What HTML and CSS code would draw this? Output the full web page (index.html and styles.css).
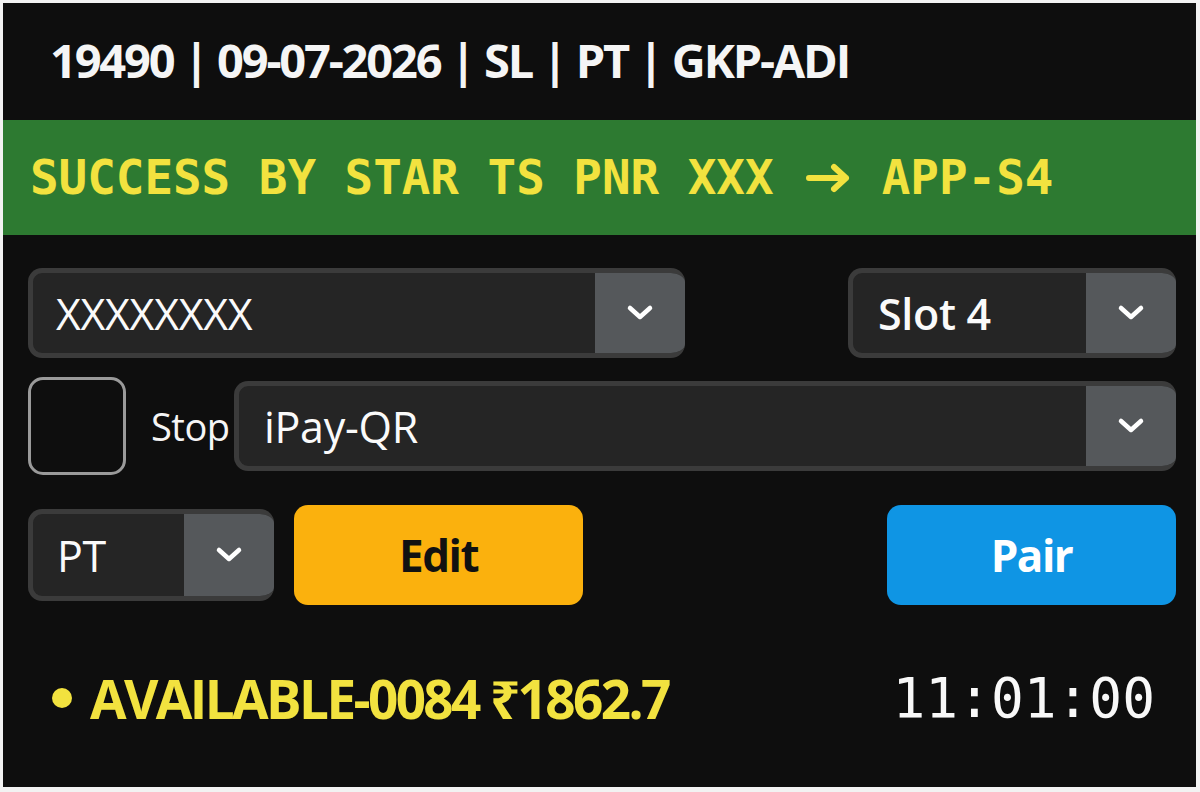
FILE: index.html
```html
<!DOCTYPE html>
<html>
<head>
<meta charset="utf-8">
<link rel="stylesheet" href="styles.css">
</head>
<body>
<div class="panel">
  <div class="header">19490 | 09-07-2026 | SL | PT | GKP-ADI</div>
  <div class="banner">SUCCESS BY STAR TS PNR XXX <span class="arrow"><svg width="44" height="32" viewBox="0 0 44 32"><path d="M3 16 H40 M28 5 L40 16 L28 27" fill="none" stroke="#f2e23f" stroke-width="6" stroke-linecap="round" stroke-linejoin="round"/></svg></span> APP-S4</div>
  <div class="controls">
    <div class="row row1">
      <div class="select sel-train">
        <span class="sel-text">XXXXXXXX</span>
        <span class="chev"><svg width="30" height="18" viewBox="0 0 30 18"><polyline points="5,4 15,13 25,4" fill="none" stroke="#fff" stroke-width="4.5" stroke-linecap="round" stroke-linejoin="round"/></svg></span>
      </div>
      <div class="select sel-slot">
        <span class="sel-text">Slot 4</span>
        <span class="chev"><svg width="30" height="18" viewBox="0 0 30 18"><polyline points="5,4 15,13 25,4" fill="none" stroke="#fff" stroke-width="4.5" stroke-linecap="round" stroke-linejoin="round"/></svg></span>
      </div>
    </div>
    <div class="row row2">
      <div class="checkbox"></div>
      <span class="stop">Stop</span>
      <div class="select sel-pay">
        <span class="sel-text">iPay-QR</span>
        <span class="chev"><svg width="30" height="18" viewBox="0 0 30 18"><polyline points="5,4 15,13 25,4" fill="none" stroke="#fff" stroke-width="4.5" stroke-linecap="round" stroke-linejoin="round"/></svg></span>
      </div>
    </div>
    <div class="row row3">
      <div class="select sel-quota">
        <span class="sel-text">PT</span>
        <span class="chev"><svg width="30" height="18" viewBox="0 0 30 18"><polyline points="5,4 15,13 25,4" fill="none" stroke="#fff" stroke-width="4.5" stroke-linecap="round" stroke-linejoin="round"/></svg></span>
      </div>
      <button class="btn btn-edit">Edit</button>
      <button class="btn btn-pair">Pair</button>
    </div>
  </div>
  <div class="status">
    <div class="avail"><span class="dot"></span>AVAILABLE-0084 ₹1862.7</div>
    <div class="clock">11:01:00</div>
  </div>
</div>
</body>
</html>
```

FILE: styles.css
```css
html, body {
  margin: 0;
  padding: 0;
  background: #f2f2f2;
}
.panel {
  margin: 3px 4px 0 3px;
  height: 784px;
  background: #0e0e0e;
  display: flex;
  flex-direction: column;
  font-family: "Open Sans", "Noto Sans", sans-serif;
  color: #fff;
}
.header {
  height: 117px;
  display: flex;
  align-items: center;
  padding-left: 47px;
  font-size: 47px;
  font-weight: 700;
  letter-spacing: -2.2px;
  color: #f5f5f5;
  box-sizing: border-box;
  padding-bottom: 4px;
}
.banner {
  height: 115px;
  background: #2d7a31;
  display: flex;
  align-items: center;
  padding-left: 27px;
  font-family: "DejaVu Sans Mono", monospace;
  font-weight: 700;
  font-size: 47.5px;
  color: #f2e23f;
  white-space: pre;
}
.arrow {
  display: inline-flex;
  width: 51px;
  box-sizing: border-box;
  padding-left: 4px;
  align-items: center;
  height: 40px;
}
.arrow svg {
  flex: none;
}
.controls {
  padding: 33px 20px 0 25px;
  display: flex;
  flex-direction: column;
}
.row {
  display: flex;
  align-items: center;
}
.row1 {
  height: 90px;
  justify-content: space-between;
}
.row2 {
  height: 98px;
  margin-top: 19px;
}
.row3 {
  height: 100px;
  margin-top: 30px;
}
.select {
  box-sizing: border-box;
  display: flex;
  align-items: stretch;
  background: #252525;
  border: 5px solid #3b3b3b;
  border-right: none;
  border-radius: 14px;
  overflow: hidden;
}
.sel-text {
  flex: 1;
  display: flex;
  align-items: center;
  padding-left: 23px;
  font-size: 43px;
  color: #fafafa;
  letter-spacing: -0.3px;
}
.chev {
  width: 90px;
  background: #55585b;
  display: flex;
  align-items: center;
  justify-content: center;
  margin: -5px 0;
}
.sel-train {
  width: 657px;
  height: 90px;
}
.sel-slot {
  width: 328px;
  height: 90px;
}
.sel-slot .sel-text {
  font-weight: 600;
  padding-left: 25px;
}
.checkbox {
  box-sizing: border-box;
  width: 98px;
  height: 98px;
  border: 3px solid #9a9a9a;
  border-radius: 15px;
}
.stop {
  font-size: 38px;
  margin-left: 25px;
  width: 83px;
  color: #f5f5f5;
  letter-spacing: -0.5px;
}
.sel-pay {
  flex: 1;
  height: 90px;
}
.sel-pay .sel-text {
  padding-left: 25px;
}
.sel-quota {
  width: 246px;
  height: 92px;
}
.sel-quota .sel-text {
  padding-left: 24px;
}
.btn {
  border: none;
  border-radius: 14px;
  height: 100px;
  width: 289px;
  font-family: "Open Sans", "Noto Sans", sans-serif;
  font-weight: 700;
  font-size: 44px;
  letter-spacing: -1.5px;
  padding: 0;
}
.btn-edit {
  background: #fbb10d;
  color: #111;
  margin-left: 20px;
}
.btn-pair {
  background: #0f95e4;
  color: #fff;
  margin-left: auto;
}
.status {
  flex: 1;
  display: flex;
  align-items: center;
  justify-content: space-between;
  padding: 4px 44px 0 49px;
  box-sizing: border-box;
}
.avail {
  display: flex;
  align-items: center;
  color: #f2e23f;
  font-size: 53px;
  font-weight: 700;
  letter-spacing: -2.6px;
}
.dot {
  width: 20px;
  height: 20px;
  border-radius: 50%;
  background: #f2e23f;
  margin-right: 18px;
}
.clock {
  font-family: "DejaVu Sans Mono", monospace;
  font-size: 54.5px;
  color: #f8f8f8;
  margin-right: -3px;
}
```
